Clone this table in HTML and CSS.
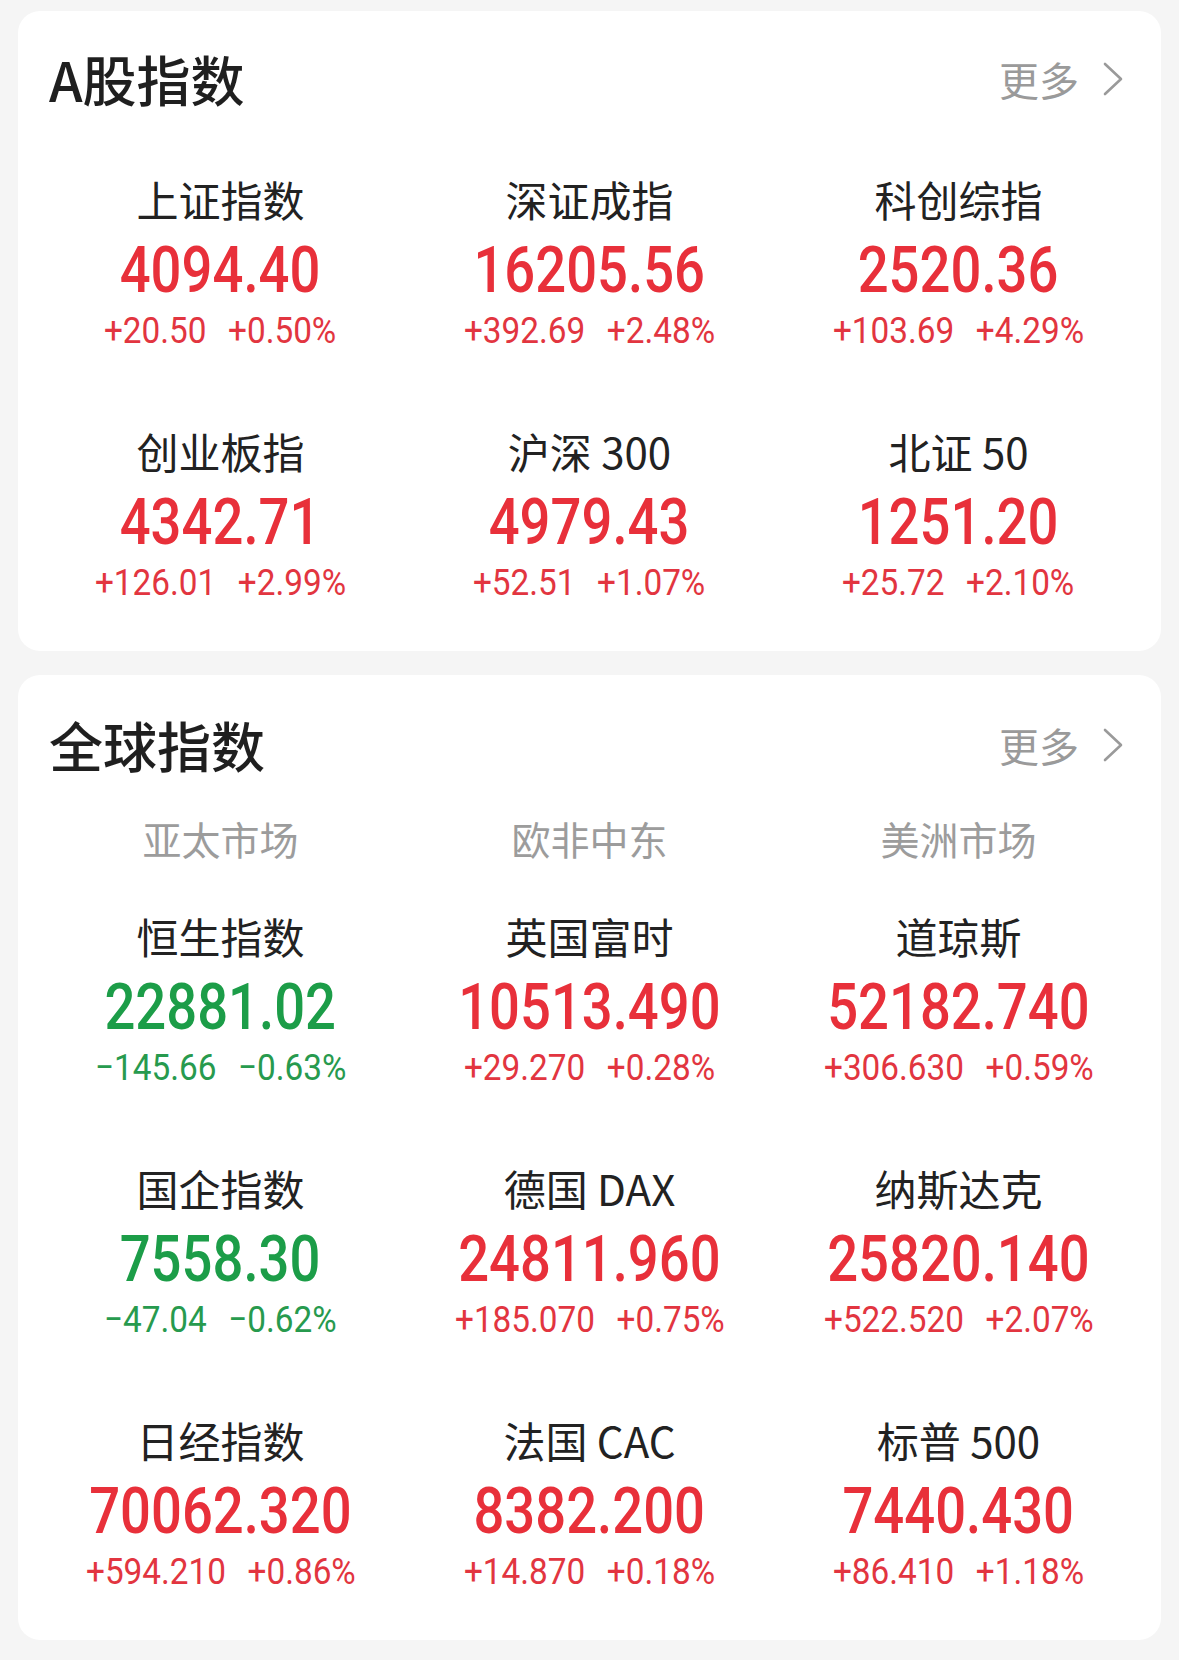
FILE: index.html
```
<!DOCTYPE html>
<html lang="zh-CN">
<head>
<meta charset="utf-8">
<title>指数</title>
<link rel="stylesheet" href="styles.css">
</head>
<body>
<div class="page">
  <section class="card card-a">
    <div class="card-head">
      <h2 class="card-title">A股指数</h2>
      <a class="more">更多<svg class="chev" viewBox="0 0 20 34" width="20" height="34"><path d="M2 2 L18 17 L2 32" fill="none" stroke="#9a9a9a" stroke-width="2.6" stroke-linecap="round" stroke-linejoin="round"/></svg></a>
    </div>
    <div class="grid grid-a">
      <div class="item up"><div class="name">上证指数</div><div class="value"><span>4094.40</span></div><div class="chg"><div class="chg-in"><span>+20.50</span><span>+0.50%</span></div></div></div>
      <div class="item up"><div class="name">深证成指</div><div class="value"><span>16205.56</span></div><div class="chg"><div class="chg-in"><span>+392.69</span><span>+2.48%</span></div></div></div>
      <div class="item up"><div class="name">科创综指</div><div class="value"><span>2520.36</span></div><div class="chg"><div class="chg-in"><span>+103.69</span><span>+4.29%</span></div></div></div>
      <div class="item up"><div class="name">创业板指</div><div class="value"><span>4342.71</span></div><div class="chg"><div class="chg-in"><span>+126.01</span><span>+2.99%</span></div></div></div>
      <div class="item up"><div class="name">沪深 300</div><div class="value"><span>4979.43</span></div><div class="chg"><div class="chg-in"><span>+52.51</span><span>+1.07%</span></div></div></div>
      <div class="item up"><div class="name">北证 50</div><div class="value"><span>1251.20</span></div><div class="chg"><div class="chg-in"><span>+25.72</span><span>+2.10%</span></div></div></div>
    </div>
  </section>

  <section class="card card-g">
    <div class="card-head">
      <h2 class="card-title">全球指数</h2>
      <a class="more">更多<svg class="chev" viewBox="0 0 20 34" width="20" height="34"><path d="M2 2 L18 17 L2 32" fill="none" stroke="#9a9a9a" stroke-width="2.6" stroke-linecap="round" stroke-linejoin="round"/></svg></a>
    </div>
    <div class="grid regions">
      <div class="region">亚太市场</div>
      <div class="region">欧非中东</div>
      <div class="region">美洲市场</div>
    </div>
    <div class="grid grid-g">
      <div class="item down"><div class="name">恒生指数</div><div class="value"><span>22881.02</span></div><div class="chg"><div class="chg-in"><span>−145.66</span><span>−0.63%</span></div></div></div>
      <div class="item up"><div class="name">英国富时</div><div class="value"><span>10513.490</span></div><div class="chg"><div class="chg-in"><span>+29.270</span><span>+0.28%</span></div></div></div>
      <div class="item up"><div class="name">道琼斯</div><div class="value"><span>52182.740</span></div><div class="chg"><div class="chg-in"><span>+306.630</span><span>+0.59%</span></div></div></div>
      <div class="item down"><div class="name">国企指数</div><div class="value"><span>7558.30</span></div><div class="chg"><div class="chg-in"><span>−47.04</span><span>−0.62%</span></div></div></div>
      <div class="item up"><div class="name">德国 DAX</div><div class="value"><span>24811.960</span></div><div class="chg"><div class="chg-in"><span>+185.070</span><span>+0.75%</span></div></div></div>
      <div class="item up"><div class="name">纳斯达克</div><div class="value"><span>25820.140</span></div><div class="chg"><div class="chg-in"><span>+522.520</span><span>+2.07%</span></div></div></div>
      <div class="item up"><div class="name">日经指数</div><div class="value"><span>70062.320</span></div><div class="chg"><div class="chg-in"><span>+594.210</span><span>+0.86%</span></div></div></div>
      <div class="item up"><div class="name">法国 CAC</div><div class="value"><span>8382.200</span></div><div class="chg"><div class="chg-in"><span>+14.870</span><span>+0.18%</span></div></div></div>
      <div class="item up"><div class="name">标普 500</div><div class="value"><span>7440.430</span></div><div class="chg"><div class="chg-in"><span>+86.410</span><span>+1.18%</span></div></div></div>
    </div>
  </section>
</div>
</body>
</html>
```
FILE: styles.css
```
* { box-sizing: border-box; }
html, body { margin: 0; padding: 0; }
body {
  background: #f5f5f5;
  font-family: "Noto Sans CJK SC", "Noto Sans", sans-serif;
  color: #222;
  width: 1179px;
  height: 1660px;
  overflow: hidden;
}
.page {
  padding: 11px 18px 0 18px;
  display: flex;
  flex-direction: column;
  gap: 24px;
}
.card {
  background: #fff;
  border-radius: 22px;
  padding: 36px 18px 52px 18px;
}
.card-g { padding-top: 38px; }
.card-head {
  display: flex;
  align-items: center;
  justify-content: space-between;
  height: 64px;
  padding: 0 20px 0 13px;
}
.card-title {
  margin: 0;
  font-size: 54px;
  line-height: 64px;
  font-weight: 500;
  color: #1f1f1f;
}
.more {
  display: flex;
  align-items: center;
  gap: 24px;
  font-size: 40px;
  line-height: 50px;
  color: #9a9a9a;
}
.chev { display: block; }
.grid {
  display: grid;
  grid-template-columns: repeat(3, 1fr);
}
.grid-a { margin-top: 60px; row-gap: 76px; }
.regions { margin-top: 36px; }
.grid-g { margin-top: 45px; row-gap: 76px; }
.region {
  text-align: center;
  font-size: 39px;
  line-height: 50px;
  color: #9c9c9c;
}
.item {
  display: flex;
  flex-direction: column;
  align-items: center;
  height: 176px;
}
.name {
  font-size: 42px;
  line-height: 56px;
  height: 56px;
  color: #222;
  white-space: nowrap;
}
.value {
  display: flex;
  justify-content: center;
  height: 88px;
  font-family: Roboto, "DejaVu Sans", sans-serif;
  font-weight: 500;
  font-size: 64px;
  line-height: 88px;
  white-space: nowrap;
}
.value span {
  display: inline-block;
  transform: scaleX(0.85);
}
.chg {
  display: flex;
  justify-content: center;
  height: 32px;
}
.chg-in {
  display: flex;
  gap: 24px;
  transform: scaleX(0.9);
  font-family: Roboto, "DejaVu Sans", sans-serif;
  font-size: 37px;
  line-height: 32px;
  white-space: nowrap;
}
.up .value { color: #e8303a; }
.up .chg { color: #e23540; }
.down .value { color: #1c9d48; }
.down .chg { color: #279a4e; }
```
